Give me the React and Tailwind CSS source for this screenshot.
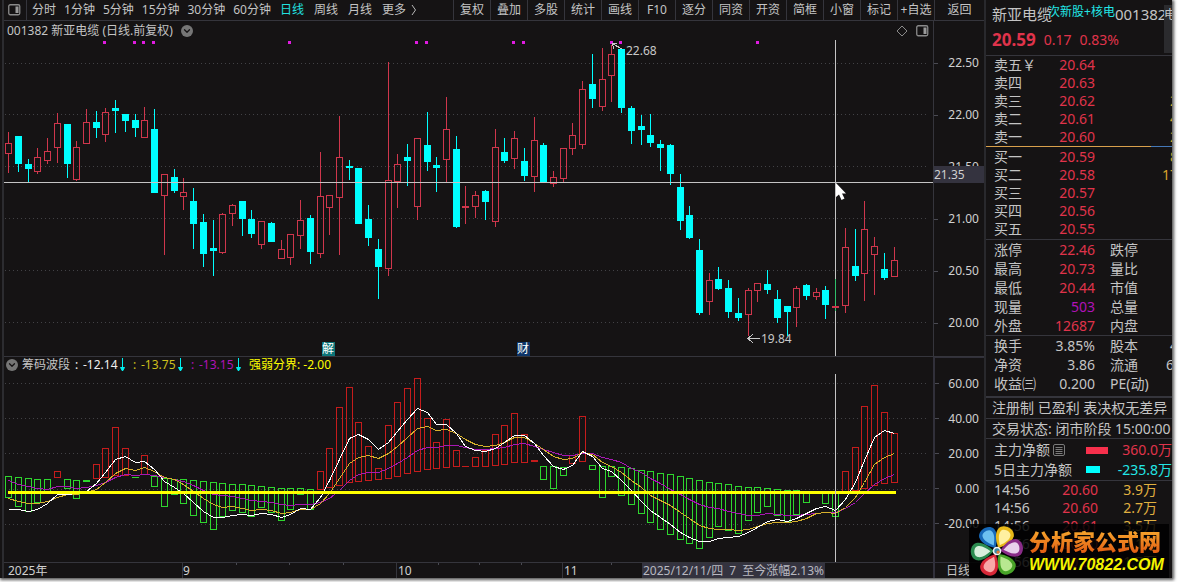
import React from 'react';
import { ChevronDown } from 'lucide-react';

const periods = ['分时', '1分钟', '5分钟', '15分钟', '30分钟', '60分钟'];
const longPeriods = ['日线', '周线', '月线', '更多'];
const tools = ['复权', '叠加', '多股', '统计', '画线', 'F10', '逐分', '同资', '开资', '简框', '小窗', '标记', '+自选'];

// [up = 1 / down = 0, high, body top, body bottom, low]
const candles = [
  [1, 132, 143, 154, 173], [0, 136, 136, 164, 172], [0, 159, 164, 169, 182], [1, 148, 157, 172, 174],
  [1, 138, 151, 161, 164], [1, 113, 123, 148, 163], [0, 124, 124, 164, 178], [1, 141, 147, 180, 181],
  [1, 109, 122, 144, 144], [0, 111, 122, 128, 138], [1, 108, 112, 135, 142], [0, 100, 108, 111, 133],
  [0, 114, 114, 121, 132], [0, 114, 120, 128, 137], [1, 107, 120, 138, 138], [0, 109, 129, 193, 193],
  [1, 174, 174, 196, 255], [0, 169, 177, 191, 193], [1, 178, 192, 197, 210], [0, 188, 201, 224, 249],
  [0, 214, 222, 254, 267], [0, 220, 248, 251, 276], [1, 213, 214, 253, 254], [1, 204, 205, 214, 226],
  [0, 201, 201, 219, 236], [0, 210, 219, 234, 238], [1, 221, 221, 245, 249], [0, 222, 223, 242, 242],
  [1, 240, 249, 259, 259], [1, 234, 234, 258, 265], [1, 200, 220, 236, 249], [0, 215, 218, 252, 264],
  [1, 152, 196, 254, 258], [1, 195, 195, 208, 235], [1, 116, 157, 198, 255], [0, 160, 166, 168, 180],
  [0, 168, 168, 224, 224], [0, 205, 219, 238, 246], [0, 239, 249, 267, 299], [1, 62, 180, 269, 276],
  [1, 154, 164, 182, 208], [0, 144, 157, 161, 186], [1, 138, 138, 207, 220], [0, 112, 145, 162, 171],
  [0, 157, 165, 168, 192], [1, 97, 129, 160, 182], [0, 136, 149, 227, 228], [1, 186, 206, 208, 224],
  [1, 191, 195, 207, 218], [0, 190, 191, 202, 220], [1, 129, 147, 222, 227], [0, 138, 152, 161, 163],
  [1, 131, 138, 159, 169], [0, 148, 161, 176, 181], [1, 117, 140, 177, 192], [0, 143, 145, 183, 183],
  [1, 171, 177, 184, 187], [1, 148, 148, 179, 182], [1, 123, 135, 149, 155], [1, 81, 89, 145, 149],
  [0, 54, 84, 99, 108], [1, 48, 79, 107, 111], [1, 45, 54, 76, 102], [0, 49, 49, 108, 113],
  [0, 106, 108, 131, 144], [0, 115, 126, 130, 145], [0, 114, 135, 143, 147], [0, 140, 144, 148, 171],
  [0, 144, 145, 174, 185], [0, 174, 187, 221, 230], [0, 206, 215, 238, 239], [0, 239, 250, 313, 315],
  [1, 273, 280, 302, 315], [0, 267, 279, 289, 290], [0, 280, 288, 312, 318], [0, 298, 313, 318, 321],
  [1, 288, 290, 315, 336], [1, 283, 283, 291, 302], [0, 270, 284, 290, 294], [0, 290, 299, 318, 323],
  [0, 306, 306, 312, 336], [1, 286, 288, 308, 327], [0, 284, 285, 296, 300], [1, 288, 292, 297, 300],
  [0, 286, 290, 305, 319], [1, 306, 306, 308, 308], [1, 228, 247, 306, 313], [0, 229, 266, 276, 281],
  [1, 201, 229, 274, 301], [1, 237, 246, 255, 295], [0, 253, 269, 278, 280], [1, 247, 260, 277, 277],
];

// [red = 1 / green = 0, top, bottom], null when the day has no bar
const waves = [
  [0, 476, 498], [0, 477, 507], [0, 478, 512], [0, 479, 503], [0, 479, 492], [1, 471, 478],
  [0, 479, 489], [0, 480, 499], [0, 480, 482], [1, 464, 479], [1, 448, 478], [1, 427, 476],
  [1, 448, 476], [0, 477, 478], [1, 455, 475], [0, 476, 487], [0, 478, 507], [0, 479, 495],
  [0, 479, 504], [0, 480, 516], [0, 481, 523], [0, 482, 530], [0, 483, 517], [0, 484, 511],
  [0, 484, 513], [0, 485, 517], [0, 486, 508], [0, 487, 513], [0, 488, 521], [0, 488, 510],
  [0, 488, 495], [0, 489, 510], [1, 471, 490], [1, 448, 488], [1, 407, 486], [1, 387, 483],
  [1, 422, 482], [1, 446, 481], [1, 468, 480], [1, 425, 479], [1, 402, 477], [1, 388, 474],
  [1, 378, 472], [1, 418, 470], [1, 442, 469], [1, 419, 468], [1, 450, 467], [1, 466, 467],
  [1, 457, 467], [1, 450, 467], [1, 434, 466], [1, 425, 465], [1, 413, 463], [1, 434, 463],
  [1, 460, 462], [0, 466, 480], [0, 466, 489], [0, 467, 476], [1, 455, 464], [1, 416, 462],
  [0, 465, 470], [0, 466, 498], [0, 466, 477], [0, 467, 496], [0, 468, 505], [0, 470, 514],
  [0, 471, 523], [0, 473, 530], [0, 474, 535], [0, 476, 540], [0, 478, 544], [0, 480, 549],
  [0, 482, 538], [0, 483, 527], [0, 484, 531], [0, 486, 534], [0, 487, 521], [0, 487, 513],
  [0, 488, 507], [0, 489, 516], [0, 490, 522], [0, 490, 515], [0, 493, 503], null,
  [0, 493, 504], [0, 493, 517], [1, 471, 492], [1, 447, 491], [1, 406, 489], [1, 385, 486],
  [1, 412, 484], [1, 433, 483],
];

const fast = [
  509, 509, 511, 509, 503, 494, 494, 493, 491, 483, 472, 459, 456, 462, 461, 469, 481, 487, 493, 502,
  511, 517, 517, 515, 514, 515, 513, 514, 517, 514, 508, 509, 497, 480, 459, 438, 434, 439, 449, 442,
  431, 419, 408, 412, 424, 424, 433, 446, 450, 451, 448, 442, 435, 435, 443, 455, 466, 469, 465, 451,
  456, 468, 471, 480, 490, 501, 510, 517, 524, 532, 537, 541, 541, 538, 537, 536, 532, 527, 521, 519,
  521, 518, 513, 508, 506, 510, 499, 482, 460, 437, 430, 433,
];
const mid = [
  498, 501, 503, 503, 501, 497, 494, 494, 492, 489, 482, 473, 468, 470, 467, 471, 477, 479, 484, 491,
  498, 504, 507, 506, 508, 510, 509, 510, 513, 512, 509, 509, 503, 493, 478, 463, 457, 455, 458, 453,
  446, 437, 428, 426, 430, 429, 433, 439, 444, 446, 445, 442, 437, 437, 443, 449, 456, 459, 458, 452,
  454, 462, 466, 472, 480, 487, 495, 500, 505, 512, 518, 525, 528, 529, 529, 530, 529, 526, 523, 522,
  522, 521, 518, 513, 512, 513, 507, 497, 482, 464, 457, 453,
];
const slow = [
  480, 484, 486, 488, 489, 486, 486, 488, 487, 485, 482, 477, 474, 475, 474, 475, 477, 479, 481, 485,
  490, 494, 495, 496, 498, 500, 501, 502, 504, 505, 504, 504, 502, 498, 490, 480, 474, 472, 472, 468,
  463, 457, 450, 447, 447, 445, 445, 447, 449, 449, 448, 447, 444, 443, 446, 449, 452, 455, 455, 453,
  453, 457, 459, 462, 468, 472, 478, 483, 489, 494, 499, 504, 507, 508, 511, 513, 515, 515, 513, 514,
  515, 515, 514, 513, 512, 512, 508, 502, 493, 484, 478, 474,
];

const eventDots = [103, 133, 142, 152, 288, 415, 425, 512, 522, 610, 619, 756];

const barX = (i) => Math.floor(8.7 + i * 9.729);
const toPoints = (ys) => ys.map((y, i) => `${barX(i) + 0.5},${y + 0.5}`).join(' ');

function PaneIcon() {
  return (
    <svg width="13" height="12" viewBox="0 0 13 12" className="shrink-0">
      <rect x="0.75" y="0.75" width="11" height="10" rx="1.5" fill="none" stroke="#8a8a8a" strokeWidth="1.3" />
      <rect x="7.5" y="2.5" width="3" height="6.5" fill="#9a9a9a" />
    </svg>
  );
}

function RoundToggle({ label }) {
  return (
    <button aria-label={label} className="flex size-3 shrink-0 items-center justify-center rounded-full bg-[#767676] text-[#151314]">
      <ChevronDown size={10} strokeWidth={3} />
    </button>
  );
}

function DownArrow() {
  return (
    <svg width="5" height="14" viewBox="0 0 5 14" className="ml-0.5 shrink-0">
      <path d="M2.5 0V13M0.5 9.5L2.5 13L4.5 9.5Z" fill="#00f0f0" stroke="#00f0f0" strokeWidth="1" />
    </svg>
  );
}

function Toolbar() {
  return (
    <nav className="flex h-[21px] items-stretch border-b border-[#35353c]">
      <div className="flex flex-1 items-center whitespace-nowrap">
        <button aria-label="侧栏" className="flex h-full items-center border-r border-[#35353c] pl-1 pr-[5px]">
          <PaneIcon />
        </button>
        <div className="flex pl-px">
          {periods.map((p) => (
            <button key={p} className="px-1">{p}</button>
          ))}
          {longPeriods.map((p) => (
            <button key={p} className={p === '日线' ? 'px-[5px] text-[#22e0e0]' : 'px-[5px]'}>{p}</button>
          ))}
        </div>
        <svg width="6" height="12" viewBox="0 0 6 12"><path d="M1 1L4.5 6L1 11" fill="none" stroke="#b8b8b8" /></svg>
      </div>
      {tools.map((t) => (
        <button key={t} className="w-[37px] shrink-0 whitespace-nowrap border-l border-[#35353c]">{t}</button>
      ))}
      <button className="w-[50px] shrink-0 border-l border-[#35353c]">返回</button>
    </nav>
  );
}

function Bar({ x, top, bottom, color, solid }) {
  if (solid || bottom - top < 3) {
    return <rect x={x - 3} y={top} width="7" height={Math.max(bottom - top, 1)} fill={color} />;
  }
  return <rect x={x - 2.5} y={top + 0.5} width="6" height={bottom - top - 1} fill="none" stroke={color} />;
}

function Candle({ i, data }) {
  const [up, high, top, bottom, low] = data;
  const x = barX(i);
  const color = up ? '#cf364c' : '#00ffff';
  return (
    <g>
      {high < top && <rect x={x} y={high} width="1" height={top - high} fill={color} />}
      {low > bottom && <rect x={x} y={bottom} width="1" height={low - bottom} fill={color} />}
      <Bar x={x} top={top} bottom={bottom} color={color} solid={!up} />
    </g>
  );
}

function GridLines({ rows }) {
  return rows.map((y) => (
    <line key={y} x1="5" x2="100%" y1={y + 0.5} y2={y + 0.5} stroke="#424246" strokeDasharray="1 3" />
  ));
}

function PriceChart() {
  return (
    <svg className="block h-[335px] w-full" shapeRendering="crispEdges">
      <g transform="translate(-4 -21)">
        <GridLines rows={[63, 114, 166, 218, 270, 322]} />
        {eventDots.map((x) => (
          <rect key={x} x={x} y="41" width="3" height="3" fill="#e01be0" />
        ))}
        {candles.map((c, i) => <Candle key={i} i={i} data={c} />)}

        <g fill="none" stroke="#c8c8c8">
          <path d="M622 49L613 44M617 43L612.5 44L614 49" />
          <path d="M760 338.5H748M753 334L748 338.5L753 343" />
        </g>
        <g fill="#c8c8c8" fontSize="12">
          <text x="626" y="55">22.68</text>
          <text x="761" y="343">19.84</text>
        </g>

        <rect x="322" y="342" width="13" height="14" fill="#0c7478" />
        <rect x="517" y="342" width="13" height="14" fill="#0d3467" />
        <g fill="#ffffff" fontSize="12">
          <text x="322" y="353">解</text>
          <text x="517" y="353">财</text>
        </g>

        <line x1="4" x2="100%" y1="182.5" y2="182.5" stroke="#c4c4c4" />
        <line x1="929" x2="934" y1="182.5" y2="182.5" stroke="#c4c4c4" />
        <line x1="835.5" x2="835.5" y1="40" y2="356" stroke="#c4c4c4" />
        <line x1="835.5" x2="835.5" y1="279" y2="311" stroke="#2fbf6a" />
        <rect x="832" y="306" width="7" height="2" fill="#cf364c" />
        <path d="M836 183V197L839 194.500L841.500 200L844.500 198.500L842 193.500H846Z" fill="#ffffff" shapeRendering="auto" />
      </g>
    </svg>
  );
}

function WaveChart() {
  return (
    <svg className="block h-[188px] w-full" shapeRendering="crispEdges">
      <g transform="translate(-4 -374)">
        <GridLines rows={[383, 418, 453, 489, 524]} />
        {waves.map((w, i) => w && (
          <Bar key={i} x={barX(i)} top={w[1]} bottom={w[2]} color={w[0] ? '#c51c1c' : '#2ed62e'} />
        ))}
        <g fill="none">
          <polyline points={toPoints(slow)} stroke="#a818b4" />
          <polyline points={toPoints(mid)} stroke="#d6b02c" />
          <polyline points={toPoints(fast)} stroke="#ffffff" />
        </g>
        <rect x="8" y="491" width="888" height="3" fill="#ffff00" />
        <line x1="835.5" x2="835.5" y1="374" y2="562" stroke="#c4c4c4" />
      </g>
    </svg>
  );
}

function TimeAxis() {
  return (
    <div className="relative h-4 flex-1 border-t border-[#35353c]">
      <svg className="block h-[15px] w-full" shapeRendering="crispEdges">
        <g transform="translate(-4 -563)">
          <path d="M182.500 563V578M396.500 563V578M562.500 563V578" stroke="#35353c" />
          <path d="M236.500 563v2M289.500 563v2M343.500 563v2M438.500 563v2M479.500 563v2M521.500 563v2M611.500 563v2" stroke="#4a4a52" />
          <g fill="#d0d0d0" fontSize="12">
            <text x="8" y="575">2025年</text>
            <text x="183" y="575">9</text>
            <text x="398" y="575">10</text>
            <text x="564" y="575">11</text>
          </g>
        </g>
      </svg>
      <div className="absolute left-[638px] top-0 flex h-[15px] gap-1.5 whitespace-nowrap bg-[#34333f] px-px leading-[15px] text-[#b8b8c0]">
        <span>2025/12/11/四</span>
        <span>7</span>
        <span>至今涨幅2.13%</span>
      </div>
    </div>
  );
}

function Reading({ value, color }) {
  return (
    <span className="flex w-[58px] items-center" style={{ color }}>
      <span className="w-2">:</span>
      <span>{value}</span>
      <DownArrow />
    </span>
  );
}

function PriceAxis() {
  return (
    <div className="relative h-[336px] border-b border-l border-[#35353c] pt-4 text-[#d0d0d0]">
      {['22.50', '22.00', '21.50', '21.00', '20.50', '20.00'].map((p) => (
        <div key={p} className="flex h-[52px] items-center justify-between">
          <span className="h-px w-1 bg-[#4a4a52]" />
          <span className="pr-[5px]">{p}</span>
        </div>
      ))}
      <div className="absolute left-0 top-[145px] h-[17px] w-full bg-[#34333f] leading-[17px]">21.35</div>
    </div>
  );
}

function WaveAxis() {
  return (
    <div className="h-[205px] border-l-2 border-t border-[#31303a] pt-2 text-[#d0d0d0]">
      {['60.00', '40.00', '20.00', '0.00', '-20.00'].map((p) => (
        <div key={p} className="flex h-[35px] items-center justify-between">
          <span className="h-px w-1 bg-[#4a4a52]" />
          <span className="pr-[5px]">{p}</span>
        </div>
      ))}
    </div>
  );
}

function Charts() {
  return (
    <div className="flex">
      <div className="min-w-0 flex-1">
        <section className="relative border-b border-[#35353c]">
          <PriceChart />
          <div className="absolute inset-x-0 top-0 flex h-5 items-center gap-2 pl-[3px] pr-1">
            <h1 className="whitespace-nowrap">001382 新亚电缆 (日线.前复权)</h1>
            <RoundToggle label="切换股票" />
            <svg width="12" height="12" viewBox="0 0 12 12" className="ml-auto">
              <path d="M6 1L11 6L6 11L1 6Z" fill="none" stroke="#8a8a8a" />
            </svg>
            <PaneIcon />
          </div>
        </section>
        <section>
          <div className="mb-px flex h-4 items-center whitespace-nowrap pl-0.5">
            <RoundToggle label="切换指标" />
            <span className="w-[57px] pl-1">筹码波段</span>
            <Reading value="-12.14" color="#f0f0f0" />
            <Reading value="-13.75" color="#cfc01c" />
            <Reading value="-13.15" color="#b012b8" />
            <span className="text-[#ffff00]">强弱分界: -2.00</span>
          </div>
          <WaveChart />
        </section>
      </div>
      <div className="w-[51px] shrink-0">
        <PriceAxis />
        <WaveAxis />
      </div>
    </div>
  );
}

const asks = [
  ['卖五￥', '20.64', ''], ['卖四', '20.63', ''], ['卖三', '20.62', '2'], ['卖二', '20.61', '4'], ['卖一', '20.60', '2'],
];
const bids = [
  ['买一', '20.59', '8'], ['买二', '20.58', '17'], ['买三', '20.57', ''], ['买四', '20.56', ''], ['买五', '20.55', ''],
];
const stats = [
  ['涨停', '22.46', '跌停', ''], ['最高', '20.73', '量比', ''], ['最低', '20.44', '市值', ''],
  ['现量', '503', '总量', ''], ['外盘', '12687', '内盘', ''],
];
const basics = [
  ['换手', '3.85%', '股本', '4'], ['净资', '3.86', '流通', '6'], ['收益㈢', '0.200', 'PE(动)', ''],
];

function Quotes({ rows }) {
  return (
    <table className="w-full table-fixed">
      <tbody>
        {rows.map(([name, price, vol]) => (
          <tr key={name} className="h-[18px]">
            <td className="w-[56px] whitespace-nowrap pl-2">{name}</td>
            <td className="w-[53px] text-right text-[#e0334b]">{price}</td>
            <td className="text-right text-[#d8a32c]"><span className="-mr-1.5">{vol}</span></td>
          </tr>
        ))}
      </tbody>
    </table>
  );
}

function Stats({ rows, red }) {
  return (
    <table className="w-full table-fixed">
      <tbody>
        {rows.map(([name, value, other, cut]) => (
          <tr key={name} className="h-[19px]">
            <td className="w-[56px] whitespace-nowrap pl-2">{name}</td>
            <td className={value === '503' ? 'w-[53px] text-right text-[#b012b8]' : red ? 'w-[53px] text-right text-[#e0334b]' : 'w-[53px] text-right'}>{value}</td>
            <td className="w-[60px] whitespace-nowrap pl-[15px]">{other}</td>
            <td className="text-right"><span className={cut === '6' ? '-mr-0.5' : '-mr-1.5'}>{cut}</span></td>
          </tr>
        ))}
      </tbody>
    </table>
  );
}

function SidePanel() {
  return (
    <aside className="h-[578px] w-[188px] shrink-0 overflow-hidden border-l-2 border-[#29292d] text-sm leading-[18px]">
      <header className="h-[55px] pl-1.5">
        <div className="relative flex h-[29px] whitespace-nowrap text-[15px]">
          <span className="pt-[5px]">新亚电缆</span>
          <span className="z-10 -ml-1 pt-[3px] text-xs leading-[18px] text-[#22e6e6]">次新股+核电</span>
          <span className="pt-[5px]">001382</span>
          <span className="absolute -right-1 top-[5px] h-12 w-3 bg-[#2b2b2e] pt-0.5 text-xs">电</span>
        </div>
        <div className="flex h-[21px] items-center gap-2 text-[#e0334b]">
          <strong className="text-[17px]">20.59</strong>
          <span>0.17</span>
          <span>0.83%</span>
        </div>
      </header>
      <div className="border-t border-[#35353c]">
        <Quotes rows={asks} />
      </div>
      <div className="flex h-px">
        <div className="flex-1 bg-[#d8a04c]" />
        <div className="w-[21px] bg-[#4478b8]" />
      </div>
      <div className="py-px">
        <Quotes rows={bids} />
      </div>
      <div className="border-t border-[#35353c]">
        <Stats rows={stats} red />
      </div>
      <div className="border-t border-[#35353c] pb-[3px]">
        <Stats rows={basics} />
      </div>
      <p className="flex h-[22px] items-center whitespace-nowrap border-t-2 border-[#35353c] pl-1.5">注册制 已盈利 表决权无差异</p>
      <p className="flex h-5 items-center whitespace-nowrap border-t border-[#35353c] pl-1.5">交易状态: 闭市阶段 15:00:00</p>
      <div className="border-t border-[#35353c] py-px pl-2">
        <div className="flex h-5 items-center">
          <span className="w-[59px] whitespace-nowrap">主力净额</span>
          <svg width="12" height="12" viewBox="0 0 12 12">
            <rect x="0.5" y="0.5" width="11" height="11" rx="1.5" fill="none" stroke="#7a7a7a" />
            <path d="M2.500 3.500H9.500M2.500 5.500H9.500M2.500 7.500H9.500M2.500 9.500H9.500" stroke="#7a7a7a" />
          </svg>
          <span className="ml-[21px] h-[7px] w-[22px] bg-[#f7304c]" />
          <span className="ml-auto text-[#e0334b]">360.0万</span>
        </div>
        <div className="flex h-[19px] items-center">
          <span className="w-[92px] whitespace-nowrap">5日主力净额</span>
          <span className="h-[7px] w-3.5 bg-[#00ffff]" />
          <span className="ml-auto text-[#22e6e6]">-235.8万</span>
        </div>
      </div>
      <table className="w-full table-fixed border-t border-[#35353c]">
        <tbody>
          {[['14:56', '20.60', '3.9万'], ['14:56', '20.60', '2.7万'], ['14:56', '20.61', '3.5万'], ['14:56', '20.60', '4.1万'], ['14:56', '20.60', '1.7万']].map(([time, price, amount], i) => (
            <tr key={i} className="h-[18px]">
              <td className="w-[60px] pl-2">{time}</td>
              <td className="w-[52px] text-right text-[#e0334b]">{price}</td>
              <td className="pr-[15px] text-right text-[#e0b040]">{amount}</td>
            </tr>
          ))}
        </tbody>
      </table>
    </aside>
  );
}

function Flower() {
  const petals = [
    [-30, '#1668b8', '#6cc0f0'],
    [26, '#e8b818', '#fff0a0'],
    [80, '#8a2c88', '#e8d0ec'],
    [147, '#48a428', '#b8e890'],
    [206, '#d82838', '#f8a8a8'],
    [268, '#2c8c50', '#d8f0dc'],
  ];
  return (
    <svg width="54" height="54" viewBox="-25 -25 50 50" className="shrink-0">
      {petals.map(([deg, outer, inner]) => (
        <g key={deg} transform={`rotate(${deg})`}>
          <path d="M0 -3C-5 -8 -9 -13 -8 -19C-6 -26 6 -26 8 -19C9 -13 5 -8 0 -3Z" fill={outer} />
          <path d="M0 -6C-3 -10 -6 -14 -5 -18C-4 -22 4 -22 5 -18C6 -14 3 -10 0 -6Z" fill={inner} />
        </g>
      ))}
      <circle r="4" fill="#f4f4f4" />
      <circle r="2.500" fill="#3a88a8" />
      <circle cx="1" cy="1" r="1.500" fill="#e07830" />
    </svg>
  );
}

export default function App() {
  return (
    <div className="bg-white pb-1 pr-[7px] font-['Noto_Sans','Noto_Sans_CJK_SC',sans-serif] text-xs text-[#c4c4c4]">
      <main className="relative flex bg-[#151314] shadow-[1px_1px_3px_1px_#555555]">
        <div className="w-1 shrink-0 border-r-2 border-[#2c2c30]" />
        <div className="min-w-0 flex-1">
          <Toolbar />
          <Charts />
          <div className="flex">
            <TimeAxis />
            <div className="h-4 w-[51px] border-l-2 border-t border-[#31303a] pl-[11px] leading-[15px]">日线</div>
          </div>
        </div>
        <SidePanel />
        <a href="#site" className="absolute bottom-0 right-[3px] flex h-[54px] w-[200px] items-center bg-black/85 pl-px">
          <Flower />
          <span className="ml-[5px] whitespace-nowrap">
            <span className="block bg-gradient-to-b from-[#f8b030] to-[#e05410] bg-clip-text text-[22px] font-black leading-[28px] text-transparent">分析家公式网</span>
            <span className="block font-['Liberation_Sans',sans-serif] text-base font-bold italic leading-5 text-[#f4f400]">WWW.70822.COM</span>
          </span>
        </a>
      </main>
    </div>
  );
}
